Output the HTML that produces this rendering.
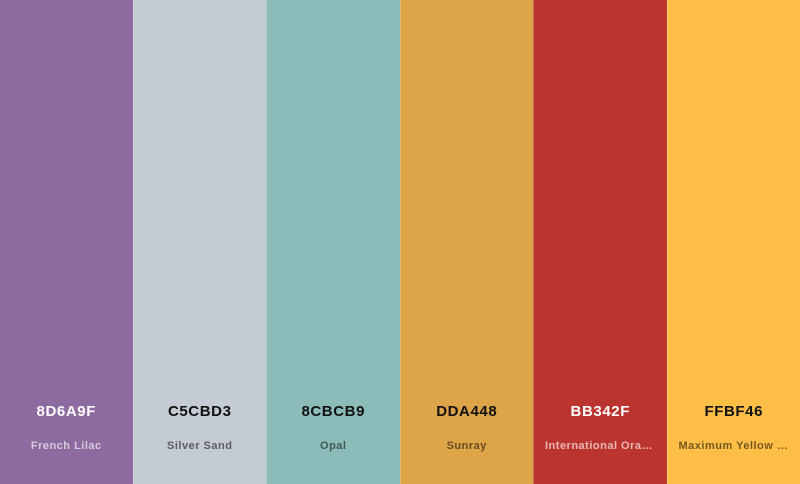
<!DOCTYPE html>
<html><head><style>
html,body{margin:0;padding:0;width:800px;height:484px;overflow:hidden;font-family:"Liberation Sans",sans-serif}
.w{display:flex;width:800px;height:484px}
.c{flex:1;position:relative;border-left:1px solid rgba(255,255,255,0.25)}
.c:first-child{border-left:none}
.h{position:absolute;top:403px;left:0;right:0;text-align:center;font-size:15px;font-weight:bold;letter-spacing:0.6px}
.n{position:absolute;top:440px;left:11px;right:11px;text-align:center;font-size:11px;font-weight:bold;white-space:nowrap;overflow:hidden;text-overflow:ellipsis;letter-spacing:0.5px}
.l .h{color:#fff}.l .n{color:rgba(255,255,255,0.65)}
.d .h{color:#111}.d .n{color:rgba(0,0,0,0.55)}
</style></head><body><div class="w">
<div class="c l" style="background:#8D6A9F"><div class="h">8D6A9F</div><div class="n">French Lilac</div></div>
<div class="c d" style="background:#C5CBD3"><div class="h">C5CBD3</div><div class="n">Silver Sand</div></div>
<div class="c d" style="background:#8CBCB9"><div class="h">8CBCB9</div><div class="n">Opal</div></div>
<div class="c d" style="background:#DDA448"><div class="h">DDA448</div><div class="n">Sunray</div></div>
<div class="c l" style="background:#BB342F"><div class="h">BB342F</div><div class="n">International Orange</div></div>
<div class="c d" style="background:#FFBF46"><div class="h">FFBF46</div><div class="n">Maximum Yellow Red</div></div>
</div></body></html>
